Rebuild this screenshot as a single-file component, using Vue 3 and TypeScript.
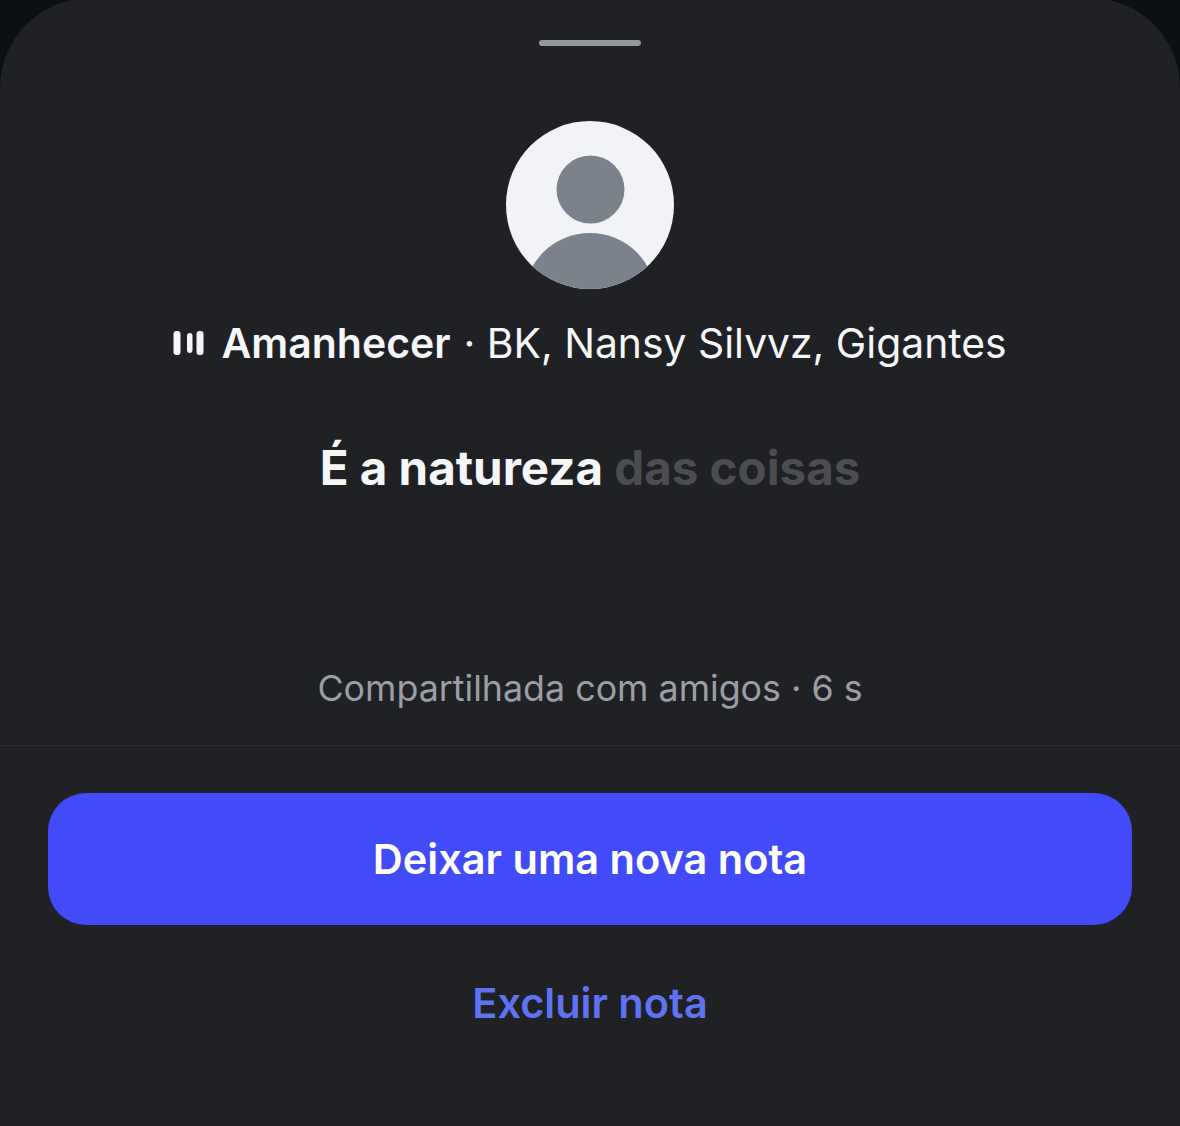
<script setup lang="ts">
const bars: { x: number; y: number; w: number; h: number }[] = [
  { x: 173.5, y: 331, w: 7, h: 24 },
  { x: 187, y: 333, w: 5.5, h: 20 },
  { x: 196.5, y: 331, w: 7, h: 24 }
]
</script>

<template>
  <div class="screen">
    <div class="sheet">
      <div class="handle"></div>
      <svg class="avatar" width="168" height="168" viewBox="0 0 168 168">
        <defs>
          <clipPath id="avatar-clip"><circle cx="84" cy="84" r="84" /></clipPath>
        </defs>
        <circle cx="84" cy="84" r="84" fill="#f1f3f6" />
        <g clip-path="url(#avatar-clip)" fill="#7b828c">
          <circle cx="84.5" cy="68.5" r="34" />
          <circle cx="84" cy="178" r="66" />
        </g>
      </svg>
      <div class="track">
        <svg class="bars" width="32" height="26" viewBox="173 330 32 26">
          <rect v-for="b in bars" :key="b.x" :x="b.x" :y="b.y" :width="b.w" :height="b.h" rx="3" fill="#f5f6f8" />
        </svg>
        <span class="song">Amanhecer</span>
        <span class="artists">· BK, Nansy Silvvz, Gigantes</span>
      </div>
      <div class="note">É a natureza <span class="dim">das coisas</span></div>
      <div class="caption">Compartilhada com amigos · 6 s</div>
      <div class="divider"></div>
      <div class="actions">
        <button class="primary">Deixar uma nova nota</button>
        <button class="link">Excluir nota</button>
      </div>
    </div>
  </div>
</template>

<style>
html, body { margin: 0; background: #0c1014; }
</style>

<style scoped>
.screen {
  width: 1180px;
  height: 1126px;
  overflow: hidden;
  background: #0c1014;
  font-family: Inter, "Liberation Sans", sans-serif;
}
.sheet {
  height: 1128px;
  margin-top: -2px;
  padding-top: 42px;
  box-sizing: border-box;
  background: #1f2125;
  border-radius: 90px 90px 0 0;
  display: flex;
  flex-direction: column;
  align-items: center;
}
.handle {
  width: 102px;
  height: 6px;
  border-radius: 3px;
  background: #94969e;
}
.avatar {
  display: block;
  margin-top: 75px;
}
.track {
  margin-top: 29px;
  height: 50px;
  display: flex;
  align-items: center;
  gap: 16px;
  color: #f5f6f8;
  font-size: 41px;
  white-space: nowrap;
}
.bars { display: block; }
.song { font-weight: 600; }
.artists { font-weight: 400; font-size: 40.85px; margin-left: -3px; }
.note {
  margin-top: 70px;
  height: 60px;
  line-height: 60px;
  font-size: 47.5px;
  font-weight: 700;
  color: #f5f6f8;
  white-space: nowrap;
}
.dim { color: #4b4d52; }
.caption {
  margin-top: 168px;
  height: 44px;
  line-height: 44px;
  font-size: 35.8px;
  color: #9b9ea5;
  white-space: nowrap;
}
.divider {
  align-self: stretch;
  height: 1px;
  margin-top: 35px;
  background: #2a2c30;
}
.actions {
  align-self: stretch;
  padding: 47px 48px 0;
  display: flex;
  flex-direction: column;
  align-items: center;
}
.primary {
  width: 100%;
  height: 132px;
  border: 0;
  border-radius: 38px;
  background: #424bf9;
  color: #fff;
  font: 600 41.5px Inter, "Liberation Sans", sans-serif;
}
.link {
  margin-top: 50px;
  padding: 0;
  height: 56px;
  border: 0;
  background: none;
  color: #5f73f0;
  font: 600 41.5px Inter, "Liberation Sans", sans-serif;
}
</style>
